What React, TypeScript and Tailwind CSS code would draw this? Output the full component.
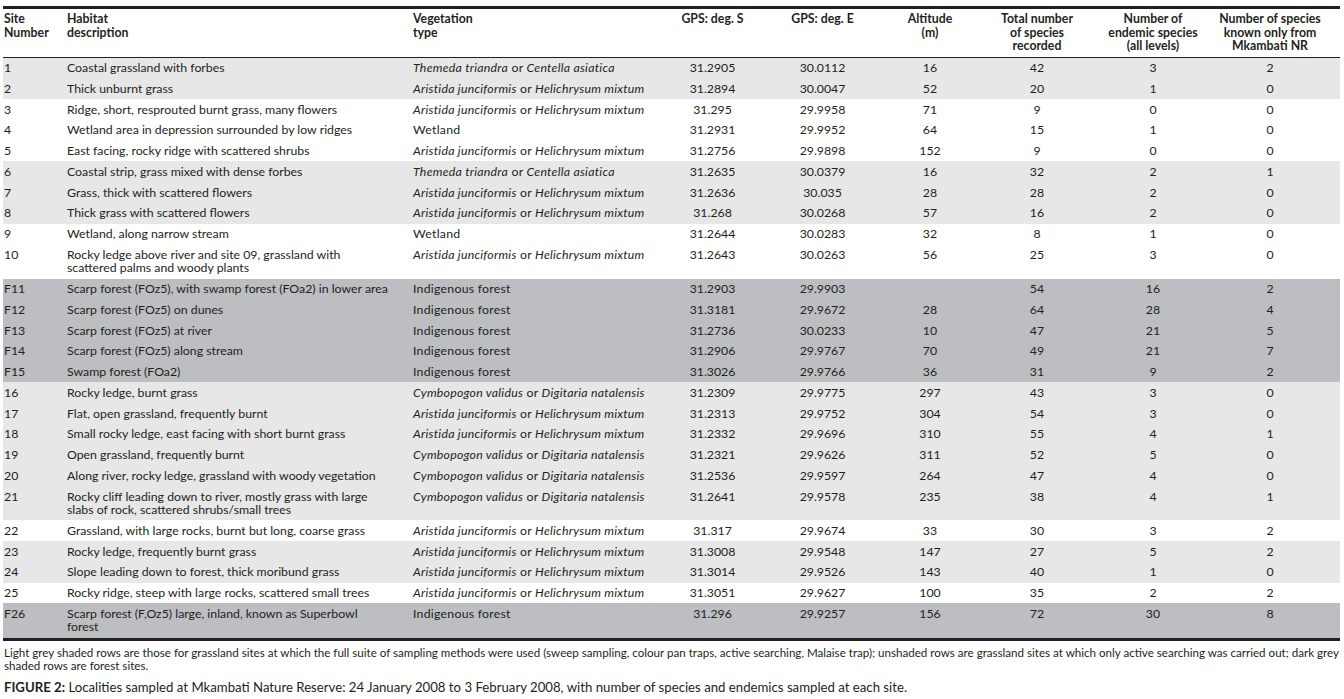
import React from 'react';

type Shade = 'light' | 'none' | 'dark';

type Row = {
  site: string;
  habitat: React.ReactNode;
  veg: 'T' | 'A' | 'W' | 'I' | 'C';
  s: string;
  e: string;
  alt: string;
  total: string;
  endemic: string;
  only: string;
  shade: Shade;
};

const rows: Row[] = [
  { site: '1', habitat: 'Coastal grassland with forbes', veg: 'T', s: '31.2905', e: '30.0112', alt: '16', total: '42', endemic: '3', only: '2', shade: 'light' },
  { site: '2', habitat: 'Thick unburnt grass', veg: 'A', s: '31.2894', e: '30.0047', alt: '52', total: '20', endemic: '1', only: '0', shade: 'light' },
  { site: '3', habitat: 'Ridge, short, resprouted burnt grass, many flowers', veg: 'A', s: '31.295', e: '29.9958', alt: '71', total: '9', endemic: '0', only: '0', shade: 'none' },
  { site: '4', habitat: 'Wetland area in depression surrounded by low ridges', veg: 'W', s: '31.2931', e: '29.9952', alt: '64', total: '15', endemic: '1', only: '0', shade: 'none' },
  { site: '5', habitat: 'East facing, rocky ridge with scattered shrubs', veg: 'A', s: '31.2756', e: '29.9898', alt: '152', total: '9', endemic: '0', only: '0', shade: 'none' },
  { site: '6', habitat: 'Coastal strip, grass mixed with dense forbes', veg: 'T', s: '31.2635', e: '30.0379', alt: '16', total: '32', endemic: '2', only: '1', shade: 'light' },
  { site: '7', habitat: 'Grass, thick with scattered flowers', veg: 'A', s: '31.2636', e: '30.035', alt: '28', total: '28', endemic: '2', only: '0', shade: 'light' },
  { site: '8', habitat: 'Thick grass with scattered flowers', veg: 'A', s: '31.268', e: '30.0268', alt: '57', total: '16', endemic: '2', only: '0', shade: 'light' },
  { site: '9', habitat: 'Wetland, along narrow stream', veg: 'W', s: '31.2644', e: '30.0283', alt: '32', total: '8', endemic: '1', only: '0', shade: 'none' },
  {
    site: '10',
    habitat: (
      <>
        Rocky ledge above river and site 09, grassland with
        <br />
        scattered palms and woody plants
      </>
    ),
    veg: 'A', s: '31.2643', e: '30.0263', alt: '56', total: '25', endemic: '3', only: '0', shade: 'none',
  },
  { site: 'F11', habitat: 'Scarp forest (FOz5), with swamp forest (FOa2) in lower area', veg: 'I', s: '31.2903', e: '29.9903', alt: '', total: '54', endemic: '16', only: '2', shade: 'dark' },
  { site: 'F12', habitat: 'Scarp forest (FOz5) on dunes', veg: 'I', s: '31.3181', e: '29.9672', alt: '28', total: '64', endemic: '28', only: '4', shade: 'dark' },
  { site: 'F13', habitat: 'Scarp forest (FOz5) at river', veg: 'I', s: '31.2736', e: '30.0233', alt: '10', total: '47', endemic: '21', only: '5', shade: 'dark' },
  { site: 'F14', habitat: 'Scarp forest (FOz5) along stream', veg: 'I', s: '31.2906', e: '29.9767', alt: '70', total: '49', endemic: '21', only: '7', shade: 'dark' },
  { site: 'F15', habitat: 'Swamp forest (FOa2)', veg: 'I', s: '31.3026', e: '29.9766', alt: '36', total: '31', endemic: '9', only: '2', shade: 'dark' },
  { site: '16', habitat: 'Rocky ledge, burnt grass', veg: 'C', s: '31.2309', e: '29.9775', alt: '297', total: '43', endemic: '3', only: '0', shade: 'light' },
  { site: '17', habitat: 'Flat, open grassland, frequently burnt', veg: 'A', s: '31.2313', e: '29.9752', alt: '304', total: '54', endemic: '3', only: '0', shade: 'light' },
  { site: '18', habitat: 'Small rocky ledge, east facing with short burnt grass', veg: 'A', s: '31.2332', e: '29.9696', alt: '310', total: '55', endemic: '4', only: '1', shade: 'light' },
  { site: '19', habitat: 'Open grassland, frequently burnt', veg: 'C', s: '31.2321', e: '29.9626', alt: '311', total: '52', endemic: '5', only: '0', shade: 'light' },
  { site: '20', habitat: 'Along river, rocky ledge, grassland with woody vegetation', veg: 'C', s: '31.2536', e: '29.9597', alt: '264', total: '47', endemic: '4', only: '0', shade: 'light' },
  {
    site: '21',
    habitat: (
      <>
        Rocky cliff leading down to river, mostly grass with large
        <br />
        slabs of rock, scattered shrubs/small trees
      </>
    ),
    veg: 'C', s: '31.2641', e: '29.9578', alt: '235', total: '38', endemic: '4', only: '1', shade: 'light',
  },
  { site: '22', habitat: 'Grassland, with large rocks, burnt but long, coarse grass', veg: 'A', s: '31.317', e: '29.9674', alt: '33', total: '30', endemic: '3', only: '2', shade: 'none' },
  { site: '23', habitat: 'Rocky ledge, frequently burnt grass', veg: 'A', s: '31.3008', e: '29.9548', alt: '147', total: '27', endemic: '5', only: '2', shade: 'light' },
  { site: '24', habitat: 'Slope leading down to forest, thick moribund grass', veg: 'A', s: '31.3014', e: '29.9526', alt: '143', total: '40', endemic: '1', only: '0', shade: 'light' },
  { site: '25', habitat: 'Rocky ridge, steep with large rocks, scattered small trees', veg: 'A', s: '31.3051', e: '29.9627', alt: '100', total: '35', endemic: '2', only: '2', shade: 'none' },
  {
    site: 'F26',
    habitat: (
      <>
        Scarp forest (F,Oz5) large, inland, known as Superbowl
        <br />
        forest
      </>
    ),
    veg: 'I', s: '31.296', e: '29.9257', alt: '156', total: '72', endemic: '30', only: '8', shade: 'dark',
  },
];

function Vegetation({ kind }: { kind: Row['veg'] }) {
  switch (kind) {
    case 'T':
      return (
        <>
          <i>Themeda triandra</i> or <i>Centella asiatica</i>
        </>
      );
    case 'A':
      return (
        <>
          <i>Aristida junciformis</i> or <i>Helichrysum mixtum</i>
        </>
      );
    case 'C':
      return (
        <>
          <i>Cymbopogon validus</i> or <i>Digitaria natalensis</i>
        </>
      );
    case 'W':
      return <>Wetland</>;
    default:
      return <>Indigenous forest</>;
  }
}

const shadeClass: Record<Shade, string> = {
  light: 'bg-[#e7e7e8]',
  none: 'bg-white',
  dark: 'bg-[#bdbec1]',
};

export default function App() {
  const td = 'py-[3.625px] align-top';
  const th = 'pt-[3px] pb-[4px] align-top font-bold';
  return (
    <div className="min-h-screen bg-white text-[#231f20] font-['Lato','Liberation_Sans',sans-serif]">
      <div className="pt-[6px] pl-[3px]">
        <table className="w-[1337px] table-fixed border-collapse text-[12.3px] leading-[13.5px]">
          <colgroup>
            <col className="w-[63px]" />
            <col className="w-[346px]" />
            <col className="w-[248px]" />
            <col className="w-[105px]" />
            <col className="w-[115px]" />
            <col className="w-[100px]" />
            <col className="w-[114px]" />
            <col className="w-[118px]" />
            <col className="w-[128px]" />
          </colgroup>
          <thead>
            <tr className="border-t-[3px] border-b border-[#231f20]">
              <th className={`${th} pl-[1px] text-left`}>
                Site
                <br />
                Number
              </th>
              <th className={`${th} pl-[1px] text-left`}>
                Habitat
                <br />
                description
              </th>
              <th className={`${th} pl-[1px] text-left`}>
                Vegetation
                <br />
                type
              </th>
              <th className={`${th} text-center`}>GPS: deg. S</th>
              <th className={`${th} text-center`}>GPS: deg. E</th>
              <th className={`${th} text-center`}>
                Altitude
                <br />
                (m)
              </th>
              <th className={`${th} text-center`}>
                Total number
                <br />
                of species
                <br />
                recorded
              </th>
              <th className={`${th} text-center`}>
                Number of
                <br />
                endemic species
                <br />
                (all levels)
              </th>
              <th className={`${th} pr-[12px] text-center`}>
                Number of species
                <br />
                known only from
                <br />
                Mkambati NR
              </th>
            </tr>
          </thead>
          <tbody className="border-b-[3px] border-[#231f20]">
            {rows.map((r) => (
              <tr key={r.site} className={shadeClass[r.shade]}>
                <td className={`${td} pl-[1px]`}>{r.site}</td>
                <td className={`${td} pl-[1px] whitespace-nowrap`}>{r.habitat}</td>
                <td className={`${td} pl-[1px] whitespace-nowrap tracking-[0.25px]`}>
                  <Vegetation kind={r.veg} />
                </td>
                <td className={`${td} text-center`}>{r.s}</td>
                <td className={`${td} text-center`}>{r.e}</td>
                <td className={`${td} text-center`}>{r.alt}</td>
                <td className={`${td} text-center`}>{r.total}</td>
                <td className={`${td} text-center`}>{r.endemic}</td>
                <td className={`${td} pr-[12px] text-center`}>{r.only}</td>
              </tr>
            ))}
          </tbody>
        </table>
        <p className="mt-[5px] text-[11.6px] leading-[13px] whitespace-nowrap pl-[1px]">
          Light grey shaded rows are those for grassland sites at which the full suite of sampling methods were used (sweep sampling, colour pan traps, active searching, Malaise trap); unshaded rows are grassland sites at which only active searching was carried out; dark grey
          <br />
          shaded rows are forest sites.
        </p>
        <p className="mt-[7px] text-[13.2px] leading-[16px] whitespace-nowrap pl-[1px]">
          <span className="font-bold">FIGURE 2:</span> Localities sampled at Mkambati Nature Reserve: 24 January 2008 to 3 February 2008, with number of species and endemics sampled at each site.
        </p>
      </div>
    </div>
  );
}
